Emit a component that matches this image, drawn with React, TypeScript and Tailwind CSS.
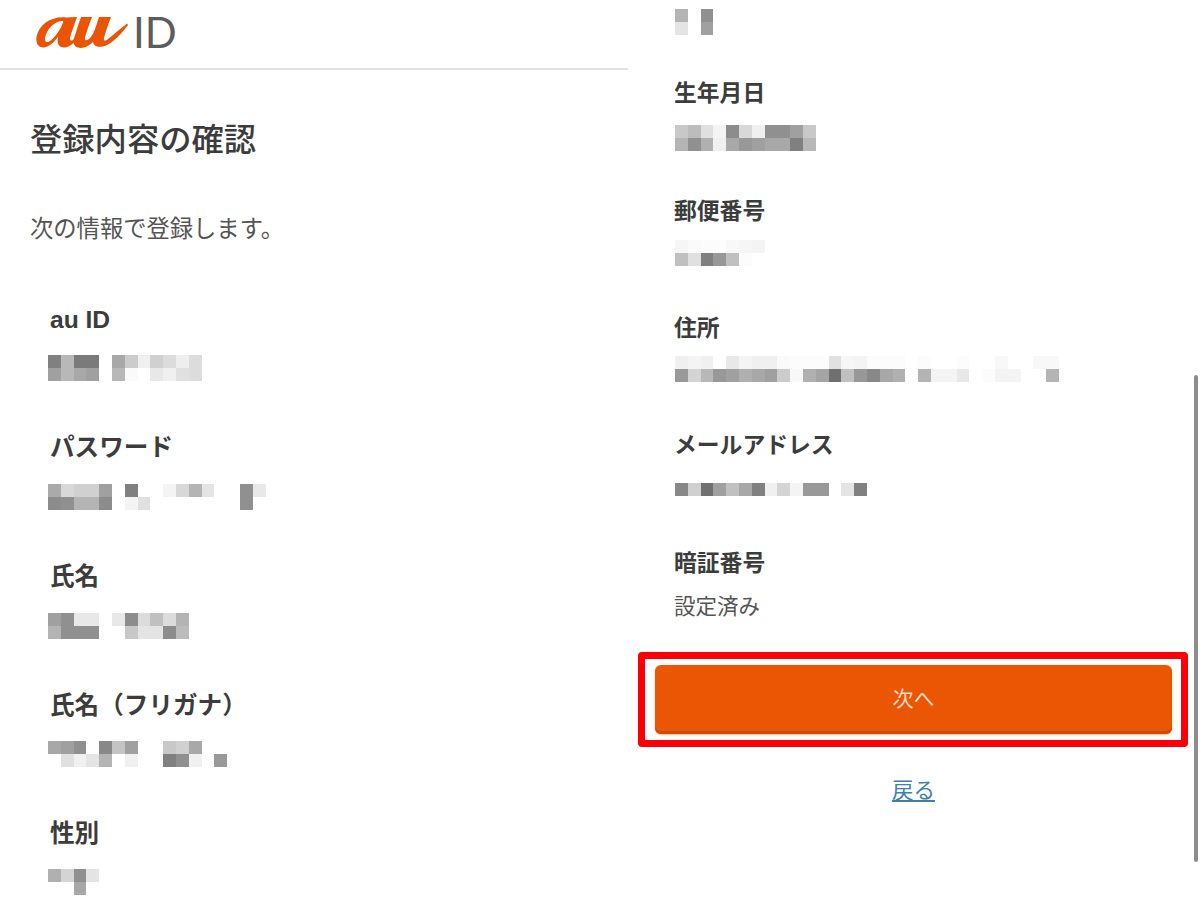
const jp = "font-['Noto_Sans_CJK_JP','Noto_Sans',sans-serif]";

type Cells = string[];

// blurred-out values, one entry per mosaic block ("" = nothing there)
function Mosaic({ rows }: { rows: Cells[] }) {
  return (
    <div className="flex flex-col">
      {rows.map((row, r) => (
        <div key={r} className="flex h-[13px]">
          {row.map((c, i) => (
            <div key={i} className="h-full w-[12.8px]" style={{ backgroundColor: c || "transparent" }} />
          ))}
        </div>
      ))}
    </div>
  );
}

const g = (s: string): Cells => s.split(" ").map((v) => (v === "-" ? "" : "#" + v + v + v));

function Label({ children }: { children: React.ReactNode }) {
  return <div className="text-[22.8px] leading-[34px] font-semibold text-[#3c3c3c]">{children}</div>;
}

function BigLabel({ children }: { children: React.ReactNode }) {
  return <div className="pl-[2px] text-[24.6px] leading-[34px] font-semibold text-[#3c3c3c]">{children}</div>;
}

function Logo() {
  return (
    <svg viewBox="0 0 92 32" className="h-[32px] w-[92px] shrink-0" fill="#e95504" fillRule="evenodd">
      <path d="M41 1 L30 1.5 C16 0 3 8 0.5 21 C-0.5 28 3 32 8 31.5 C13 31 18 26 22 21 C21 27 22 32 29 31.5 C33 31 37 28 39 25 L38 23 C36 25 34 25 34 23 C34 20 38 10 41 1 Z M27 5 C27.5 5.5 27 7 26 9 C23 16 16 25 12 26 C9 26.5 8.5 24 9.5 20 C11.5 12 20 4.5 27 5 Z" />
      <path d="M45 1 L56 1 C53 9 50 17 49 22 C48.5 25 51 25 54 22 C58 18 60 10 63 1 L75 1 C72 9 69 18 68 22 C67.5 25 69 25.5 72 23 C77 19 84 13 91 7.5 L92 9 C86 17 78 26 70 29.5 C64 32 58 31 57 26 C53 30 47 33 42 31.5 C36 30 37 24 39.5 18 C41 12 43 7 45 1 Z" />
    </svg>
  );
}

export default function App() {
  return (
    <div className={`flex h-[916px] w-[1200px] overflow-hidden bg-white ${jp}`}>
      <div className="flex w-[628px] shrink-0 flex-col">
        <header className="flex h-[70px] shrink-0 items-center gap-[5px] border-b-2 border-[#e2e2e2] pb-[4px] pl-[36px]">
          <Logo />
          <span className="font-['Lato',sans-serif] text-[42px] leading-none font-normal text-[#5c5c5c]">ID</span>
        </header>
        <h1 className="mt-[45px] pl-[30px] text-[32.3px] leading-[44px] font-medium text-[#3c3c3c]">登録内容の確認</h1>
        <p className="mt-[53px] pl-[30px] text-[23.3px] leading-[30px] text-[#555555]">次の情報で登録します。</p>
        <dl className="mt-[58px] flex flex-col gap-[47px] pl-[48px]">
          <div>
            <BigLabel>
              <span className="font-['Liberation_Sans',sans-serif] font-bold">au ID</span>
            </BigLabel>
            <div className="mt-[18px]">
              <Mosaic rows={[g("80 b8 7a 7a - a8 cc f0 d0 dc ee dc"), g("a0 b8 a8 a0 - b8 fa ff e8 f0 e0 dc")]} />
            </div>
          </div>
          <div>
            <BigLabel>パスワード</BigLabel>
            <div className="mt-[22px]">
              <Mosaic rows={[g("aa d8 d0 d0 a0 - 80 - - f4 d8 b4 e4 - - 90 e8"), g("8c 90 b4 b4 8c - f4 e0 - - - - - - - 90")]} />
            </div>
          </div>
          <div>
            <BigLabel>氏名</BigLabel>
            <div className="mt-[22px]">
              <Mosaic rows={[g("a0 90 e8 e8 - e8 8c dc c0 dc b4"), g("b4 90 90 90 - - c8 e4 e4 8c bc")]} />
            </div>
          </div>
          <div>
            <BigLabel>氏名（フリガナ）</BigLabel>
            <div className="mt-[21px]">
              <Mosaic rows={[g("a8 a0 90 - 88 c4 a0 - - c8 d0 a8"), g("- e0 f0 e4 b4 - f0 - - 80 90 f0 - 99")]} />
            </div>
          </div>
          <div>
            <BigLabel>性別</BigLabel>
            <div className="mt-[21px]">
              <Mosaic rows={[g("b0 d4 90 e4"), g("- - a8")]} />
            </div>
          </div>
        </dl>
      </div>

      <div className="relative flex min-w-0 flex-1 flex-col">
        <div className="flex flex-col pt-[9px] pl-[47px]">
          <Mosaic rows={[g("b4 - 90"), g("e4 - a0")]} />
          <div className="mt-[40px] -ml-[1px]"><Label>生年月日</Label></div>
          <div className="mt-[16px]">
            <Mosaic rows={[g("c8 bc e0 f4 8c d8 f0 90 90 a0 c8"), g("b4 90 b0 f0 a8 98 a0 a8 a8 80 b8")]} />
          </div>
          <div className="mt-[42px] -ml-[1px]"><Label>郵便番号</Label></div>
          <div className="mt-[13px]">
            <Mosaic rows={[g("f6 fa fc fc f8 f6 f4"), g("c0 e0 80 98 c0 fc")]} />
          </div>
          <div className="mt-[44px] -ml-[1px]"><Label>住所</Label></div>
          <div className="mt-[12px]">
            <Mosaic
              rows={[
                g("f0 f4 f0 - e8 f4 f0 f0 fa fc fc fc e0 f6 f4 fc fc fc - fc - - fc - - f8 - - f8 f8"),
                g("99 d4 b8 98 a0 b0 a8 a0 cc f8 b0 a4 70 c0 98 88 a8 b0 - b4 f4 f4 e8 - fc f4 f4 - - b4"),
              ]}
            />
          </div>
          <div className="mt-[45px] -ml-[1px]"><Label>メールアドレス</Label></div>
          <div className="mt-[22px]">
            <Mosaic rows={[g("88 d0 70 a0 c0 a8 80 f0 d4 f4 99 99 - e4 80")]} />
          </div>
          <div className="mt-[49px] -ml-[1px]"><Label>暗証番号</Label></div>
          <div className="mt-[11px] -ml-[1px] text-[21.5px] leading-[30px] text-[#555555]">設定済み</div>
        </div>

        <div className="mt-[32px] ml-[10px] w-[550px] rounded-[4px] border-[7px] border-[#fb0007] py-[6px] pr-[9px] pl-[10px]">
          <button className="h-[69px] w-full rounded-[6px] bg-[#eb5605] pb-[4px] text-[21px] text-[#f8dcc8] shadow-[inset_0_-3px_0_#c94f0c,0_1px_2px_#e8b89c]">
            次へ
          </button>
        </div>
        <a className="mt-[27px] ml-[254px] w-fit pl-[10px] text-[21.5px] leading-[30px] text-[#3f80a8] underline">戻る</a>

        <div className="absolute top-[375px] right-[2px] h-[487px] w-[4px] rounded-full bg-[#8c8c8c]" />
      </div>
    </div>
  );
}
